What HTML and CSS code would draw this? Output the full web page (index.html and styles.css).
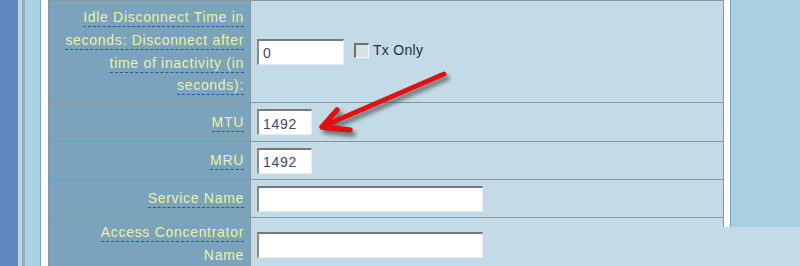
FILE: index.html
```html
<!DOCTYPE html>
<html lang="en">
<head>
	<meta charset="UTF-8">
	<title>PPPoE</title>
	<link rel="stylesheet" href="styles.css">
</head>
<body>
	<div class="page">
		<div class="rail"></div>
		<div class="form">
			<div class="row idle">
				<div class="label"><p><span>Idle Disconnect Time in<br>seconds: Disconnect after<br>time of inactivity (in<br>seconds):</span></p></div>
				<div class="value">
					<input class="field short" type="text" value="0">
					<label class="check"><span class="box"></span>Tx Only</label>
				</div>
			</div>
			<div class="row mtu">
				<div class="label"><p><span>MTU</span></p></div>
				<div class="value"><input class="field tiny" type="text" value="1492"></div>
			</div>
			<div class="row mru">
				<div class="label"><p><span>MRU</span></p></div>
				<div class="value"><input class="field tiny" type="text" value="1492"></div>
			</div>
			<div class="row service">
				<div class="label"><p><span>Service Name</span></p></div>
				<div class="value"><input class="field long" type="text" value=""></div>
			</div>
			<div class="row access">
				<div class="label"><p><span>Access Concentrator</span><br>Name</p></div>
				<div class="value"><input class="field long" type="text" value=""></div>
			</div>
		</div>
		<div class="side"></div>
	</div>

	<svg class="arrow" width="800" height="266" viewBox="0 0 800 266">
		<path d="M444 74 L326 125" stroke="#e3100f" stroke-width="5" stroke-linecap="round" fill="none"/>
		<path d="M337 110 L322 127 L350 130" stroke="#e3100f" stroke-width="5.5" stroke-linecap="round" stroke-linejoin="round" fill="none"/>
	</svg>
</body>
</html>
```

FILE: styles.css
```css
*{margin:0;padding:0;box-sizing:border-box;}
body{
	background-color:#c2dbe6;
	font-family:"Liberation Sans", Arial, sans-serif;
	font-size:14px;
	letter-spacing:0.7px;
	overflow:hidden;
}
.page{
	display:flex;
	align-items:flex-start;
	height:266px;
	overflow:hidden;
}
.rail{
	width:48px;
	align-self:stretch;
	background:linear-gradient(to right,
		#6089bf 0 18px,
		#c8d3dc 18px 22px,
		#8ab0cf 22px 25px,
		#abd1e3 25px 40px,
		#7aa8cc 40px 41px,
		#ffffff 41px 48px);
}
.form{
	width:675px;
	border-left:1px solid #8b969c;
}
.row{
	display:grid;
	grid-template-columns:202px 1fr;
	border-top:1px solid #8b969c;
}
.row.idle{height:102px;}
.row.mtu{height:39px;}
.row.mru{height:38px;}
.row.service{height:38px;}
.row.access{height:60px;}
.label{
	background-color:#7ba3bc;
	border-right:1px solid #8b969c;
	color:#edf2a6;
	text-align:right;
	padding-right:6px;
	line-height:22.6px;
	display:flex;
	flex-direction:column;
	justify-content:center;
}
.row.access .label{justify-content:flex-start;padding-top:3px;}
.label span{
	border-bottom:1.5px dashed #1f5d9c;
	padding-bottom:1px;
}
.value{
	background-color:#c2dbe6;
	display:flex;
	align-items:center;
	padding-left:6px;
}
.row.access .value{align-items:flex-start;padding-top:14px;}
.field{
	height:26px;
	background:#fff;
	border-top:2px solid #787878;
	border-left:2px solid #8a8a8a;
	border-right:1px solid #e6eef2;
	border-bottom:1px solid #e6eef2;
	font-family:"Liberation Sans", Arial, sans-serif;
	font-size:14px;
	letter-spacing:0.7px;
	color:#3e4c5c;
	padding:2px 0 0 4px;
	outline:none;
}
.field.short{width:87px;}
.field.tiny{width:55px;}
.field.long{width:226px;}
.check{
	display:flex;
	align-items:center;
	margin-left:10px;
	color:#26303a;
	letter-spacing:0.3px;
	margin-top:-3px;
}
.check .box{
	width:15px;
	height:15px;
	background:#d6e2e8;
	border-top:2px solid #6f6f6f;
	border-left:2px solid #6f6f6f;
	border-right:1px solid #f4f8fa;
	border-bottom:1px solid #f4f8fa;
	margin-right:4px;
}
.side{
	width:77px;
	height:227px;
	border-left:1px solid #8b969c;
	background:linear-gradient(to right,
		#ffffff 0 6px,
		#6d9cc4 6px 7px,
		#a9d0e0 7px);
}
.arrow{
	position:absolute;
	left:0;
	top:0;
	pointer-events:none;
	filter:drop-shadow(3px 4px 2px rgba(50,50,50,0.65));
}
```
